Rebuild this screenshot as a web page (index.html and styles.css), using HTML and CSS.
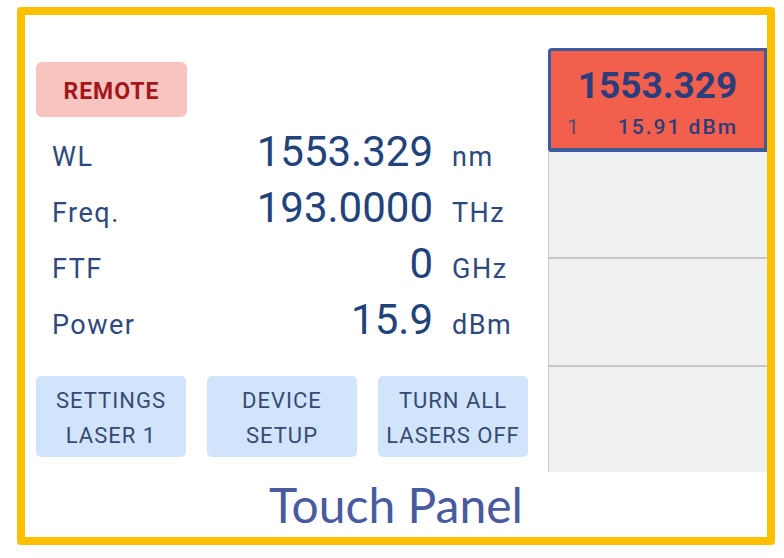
FILE: index.html
```html
<!DOCTYPE html>
<html lang="en">
<head>
    <meta charset="UTF-8">
    <title>Touch Panel</title>
    <link rel="stylesheet" href="styles.css">
</head>
<body>
<div class="frame">
    <div class="screen">
        <section class="main">
            <div class="remote">REMOTE</div>
            <div class="readout">
                <div class="row"><span class="label">WL</span><span class="value">1553.329</span><span class="unit">nm</span></div>
                <div class="row"><span class="label">Freq.</span><span class="value">193.0000</span><span class="unit">THz</span></div>
                <div class="row"><span class="label">FTF</span><span class="value">0</span><span class="unit">GHz</span></div>
                <div class="row"><span class="label">Power</span><span class="value">15.9</span><span class="unit">dBm</span></div>
            </div>
            <div class="actions">
                <div class="btn">SETTINGS<br>LASER 1</div>
                <div class="btn">DEVICE<br>SETUP</div>
                <div class="btn">TURN ALL<br>LASERS OFF</div>
            </div>
        </section>
        <aside class="lasers">
            <div class="card active">
                <div class="card-wl">1553.329</div>
                <div class="card-info"><span class="card-num">1</span><span>15.91 dBm</span></div>
            </div>
            <div class="slots">
                <div class="slot"></div>
                <div class="slot"></div>
                <div class="slot"></div>
            </div>
        </aside>
    </div>
    <div class="caption">Touch Panel</div>
</div>
</body>
</html>
```

FILE: styles.css
```css
*{
    margin: 0;
    padding: 0;
    box-sizing: border-box;
}
body{
    background: #ffffff;
    font-family: Roboto, "Liberation Sans", sans-serif;
}
.frame{
    width: 758px;
    height: 538px;
    margin: 7px 0 0 17px;
    border: 8px solid #ffc000;
    border-radius: 4px;
    background: #ffffff;
}
.screen{
    display: flex;
    height: 457px;
}
.main{
    width: 523px;
    padding: 47px 0 0 11px;
}
.remote{
    width: 151px;
    height: 55px;
    display: flex;
    align-items: center;
    justify-content: center;
    padding-top: 3px;
    background: #f7c4c0;
    border-radius: 6px;
    color: #a3171b;
    font-size: 23px;
    font-weight: bold;
    letter-spacing: 1px;
}
.readout{
    margin: 7px 0 0 16px;
}
.row{
    display: flex;
    align-items: baseline;
    height: 56px;
}
.label{
    width: 150px;
    font-size: 27px;
    letter-spacing: 1.5px;
    color: #2e4a7c;
}
.value{
    width: 231px;
    text-align: right;
    font-size: 42px;
    line-height: 56px;
    color: #22427a;
}
.unit{
    margin-left: 19px;
    font-size: 27px;
    letter-spacing: 1.5px;
    color: #2e4a7c;
}
.actions{
    display: flex;
    gap: 21px;
    margin-top: 28px;
}
.btn{
    width: 150px;
    height: 81px;
    display: flex;
    align-items: center;
    justify-content: center;
    padding-top: 2px;
    text-align: center;
    background: #d1e4fb;
    border-radius: 5px;
    color: #364b74;
    font-size: 22px;
    line-height: 35px;
    letter-spacing: 1px;
}
.lasers{
    width: 219px;
    display: flex;
    flex-direction: column;
    padding-top: 33px;
}
.card{
    height: 104px;
    border: 3px solid #3d5b9d;
    border-bottom-width: 4px;
    border-radius: 4px 0 0 3px;
    background: #f2604d;
    color: #2b3d7a;
    padding-top: 13px;
}
.card-wl{
    text-align: center;
    font-size: 37px;
    font-weight: bold;
    line-height: 44px;
}
.card-info{
    display: flex;
    justify-content: space-between;
    margin-top: 7px;
    padding: 0 26px 0 16px;
    font-size: 21px;
    font-weight: 500;
    line-height: 24px;
    letter-spacing: 2px;
}
.card-num{
    color: #5a4b72;
    font-weight: normal;
}
.slots{
    flex: 1;
    display: flex;
    flex-direction: column;
    background: #eff0f0;
    border-left: 1px solid #c9c9c9;
}
.slot{
    flex: 1;
}
.slot + .slot{
    border-top: 2px solid #c8c8c8;
}
.caption{
    margin-top: 4px;
    text-align: center;
    font-family: Lato, "Open Sans", sans-serif;
    font-size: 48px;
    line-height: 57px;
    color: #4a5a9e;
}
```
